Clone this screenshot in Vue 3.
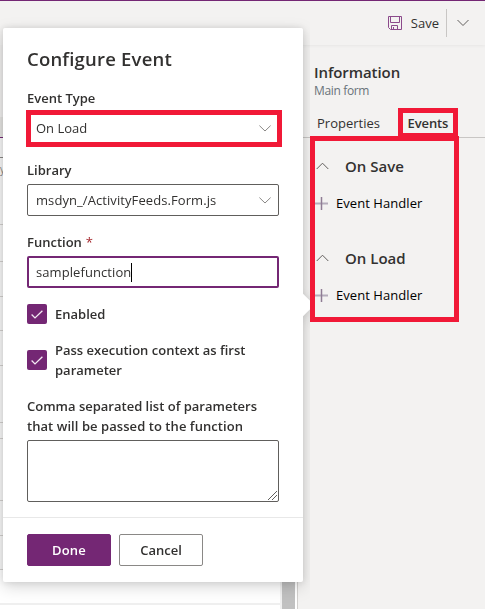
<script setup>
import { ref } from 'vue'

const fn = ref('samplefunction')
const params = ref('')
const groups = [
  { title: 'On Save', key: 'save' },
  { title: 'On Load', key: 'load' },
]
</script>

<template>
  <div class="app">
    <header class="commandbar">
      <button class="save">
        <svg width="14" height="14" viewBox="0 0 14 14" fill="none" stroke="#8b4a8b">
          <path d="M.5.5h13v13H2.500L.5 11.500zM2.500.5v6h9v-6M3.500 13.500V9.500h6v4M5.500 11v2.500" />
        </svg>
        <span class="t-save">Save</span>
      </button>
      <span class="split"></span>
      <svg class="more" width="12" height="8" viewBox="0 0 12 8" fill="none" stroke="#605e5c">
        <path d="M.5 1L6 6.500L11.500 1" />
      </svg>
    </header>

    <main class="body">
      <section class="canvas">
        <div class="canvas-head"></div>
        <div class="canvas-tools"></div>
        <div class="canvas-form">
          <i class="dark"></i><i class="cell">y</i><i></i><i></i><i></i><i></i>
          <i></i><i></i><i></i><i></i><i></i><i></i>
        </div>
        <div class="scrollbar"></div>
      </section>

      <aside class="panel">
        <div class="t-info">Information</div>
        <div class="t-main">Main form</div>
        <nav class="tabs">
          <span class="t-props">Properties</span>
          <span class="mark tab-mark"><b class="t-events">Events</b></span>
        </nav>
        <div class="mark events-mark">
          <section v-for="g in groups" :key="g.key" class="group">
            <div class="group-head">
              <svg width="13" height="8" viewBox="0 0 13 8" fill="none" stroke="#605e5c">
                <path d="M.7 7L6.500 1.200L12.300 7" />
              </svg>
              <span>{{ g.title }}</span>
            </div>
            <div class="handler">
              <svg width="13" height="13" viewBox="0 0 13 13">
                <path d="M0 6.500h13" stroke="#b5adbb" stroke-width="2" />
                <path d="M6.500 0v13" stroke="#8f7c94" stroke-width="1.500" />
              </svg>
              <span class="t-handler">Event Handler</span>
            </div>
          </section>
        </div>
      </aside>
    </main>

    <div class="callout">
      <span class="beak"></span>
      <div class="dialog">
        <div class="content">
          <h1><span class="t-title">Configure Event</span></h1>
          <label><span class="t-type">Event Type</span></label>
          <div class="select mark type-mark">
            <span class="t-onload">On Load</span>
            <svg width="12" height="7" viewBox="0 0 12 7" fill="none" stroke="#8a8886"><path d="M.4.6L6 6L11.600.6" /></svg>
          </div>
          <label class="l-library"><span class="t-library">Library</span></label>
          <div class="select library">
            <span class="t-file">msdyn_/ActivityFeeds.Form.js</span>
            <svg width="12" height="7" viewBox="0 0 12 7" fill="none" stroke="#8a8886"><path d="M.4.6L6 6L11.600.6" /></svg>
          </div>
          <label class="l-function"><span class="t-function">Function</span><em>*</em></label>
          <div class="input"><span class="t-fn">{{ fn }}</span><i class="caret"></i></div>
          <div class="check first">
            <span class="box"><svg width="12" height="9" viewBox="0 0 12 9" fill="none" stroke="#f3eaf3" stroke-width="1.300"><path d="M.6 4.500L4 7.900L11.400.7" /></svg></span>
            <span class="t-enabled">Enabled</span>
          </div>
          <div class="check second">
            <span class="box"><svg width="12" height="9" viewBox="0 0 12 9" fill="none" stroke="#f3eaf3" stroke-width="1.300"><path d="M.6 4.500L4 7.900L11.400.7" /></svg></span>
            <span><span class="t-pass">Pass execution context as first</span><br><span class="t-param">parameter</span></span>
          </div>
          <label class="l-params"><span class="t-comma">Comma separated list of parameters</span><br><span class="t-that">that will be passed to the function</span></label>
          <div class="area">
            {{ params }}
            <svg width="9" height="9" viewBox="0 0 9 9" stroke="#605e5c"><path d="M0 9L9 0M4 9L9 4" /></svg>
          </div>
        </div>
        <footer>
          <button class="btn primary"><span class="t-done">Done</span></button>
          <button class="btn"><span class="t-cancel">Cancel</span></button>
        </footer>
      </div>
    </div>
  </div>
</template>

<style>
body { margin: 0; overflow: hidden; }
</style>

<style scoped>
* { box-sizing: border-box; }
.app { position: relative; width: 485px; height: 609px; overflow: hidden; background: #f3f2f1; color: #323130; font: 13px/20px "Open Sans", "Noto Sans", sans-serif; display: flex; flex-direction: column; }
svg { display: block; flex: none; }
span { white-space: nowrap; }
button { font: inherit; color: inherit; background: none; border: 0; padding: 0; }
.commandbar { height: 45px; flex: none; border-top: 1px solid #742774; display: flex; align-items: center; justify-content: flex-end; padding-right: 16px; box-shadow: 0 1px 3px #0000000d; }
.save { display: flex; align-items: center; gap: 9px; }
.split { width: 1px; height: 28px; background: #c8c6c4; margin: 0 10px 0 7px; }
.body { flex: 1; display: grid; grid-template-columns: 297px 1fr; min-height: 0; }
.canvas { display: grid; grid-template: 72px 21px 1fr / 1fr 15px; background: #fff; }
.canvas-head, .canvas-tools { grid-column: 1 / 3; background: #f0efee; }
.canvas-tools { background: #e5e4e2; border-bottom: 1px solid #742774; }
.canvas-form { display: grid; grid-template-rows: 20px 67px 37px 35px 34px 35px 57px 16px 62px 35px 34px 35px; background: #fff; border-right: 2px solid #f1f1f1; }
.canvas-form i { border-bottom: 1px solid #d2d0ce; background: #f8f8f8; }
.canvas-form .dark { border-color: #8a8886; }
.cell { font-size: 10px; font-style: normal; color: #8a8886; padding-top: 1px; }
.canvas-form i:last-child { border-bottom: 2px solid #efefef; background: #fff; }
.scrollbar { background: #c1c1c1; margin-right: 2px; }
.panel { border-left: 1px solid #d2d0ce; padding: 17px 0 0 12px; }
.t-info { font-size: 15px; font-weight: 600; padding-left: 4px; letter-spacing: -.08px; }
.t-main { font-size: 12px; line-height: 18px; color: #69727a; padding-left: 4px; letter-spacing: -.35px; }
.tabs { display: flex; align-items: center; height: 38px; margin-left: -12px; padding: 8px 0 0 19px; border-bottom: 1px solid #c8c6c4; }
.t-events { font-weight: 600; letter-spacing: -.1px; }
.mark { border: 5px solid #f11937; }
.tab-mark { width: 60px; height: 30px; margin-left: 18px; display: flex; align-items: center; justify-content: center; }
.events-mark { position: relative; width: 149px; height: 186px; margin-top: -2px; padding-top: 15px; }
.group { height: 92px; }
.group-head { height: 20px; display: flex; align-items: center; gap: 16px; padding-left: 1px; font-size: 15px; font-weight: 600; }
.handler { height: 20px; margin-top: 17px; display: flex; align-items: center; gap: 8px; color: #000; letter-spacing: .06px; }
.callout { position: absolute; left: 3px; top: 28px; width: 300px; height: 554px; filter: drop-shadow(0 5px 8px #00000026) drop-shadow(0 0 3px #0000001c); clip-path: polygon(-20px -20px, 307px -20px, 307px 574px, 330px 574px, 330px 590px, -20px 590px); }
.beak { position: absolute; right: -8px; top: 269px; width: 16px; height: 16px; background: #fff; transform: rotate(45deg); }
.dialog { position: relative; height: 100%; background: #fff; border-radius: 2px; display: flex; flex-direction: column; }
.content { height: 490px; padding: 17px 24px 0; display: flex; flex-direction: column; }
h1 { margin: 0; font-size: 18.500px; line-height: 28px; font-weight: 600; height: 28px; letter-spacing: .2px; }
label { display: block; font-weight: 600; height: 20px; margin-top: 15px; }
.select { height: 32px; flex: none; display: flex; align-items: center; justify-content: space-between; padding: 0 7px 0 8px; }
.type-mark { height: 37px; width: 256px; margin: 2px 0 0 -1px; padding: 0 6px 1px 5px; }
.l-library { margin-top: 13px; }
.library { border: 1px solid #605e5c; border-radius: 2px; margin-top: 4px; }
.t-file { letter-spacing: .08px; }
.l-function { margin-top: 16px; }
.t-fn { letter-spacing: .08px; }
em { color: #a4262c; font-style: normal; font-weight: 400; margin-left: 4px; }
.input { height: 32px; flex: none; margin-top: 4px; border: 2px solid #742774; border-radius: 2px; display: flex; align-items: center; padding-left: 7px; }
.caret { width: 1px; height: 19px; background: #000; }
.check { display: flex; align-items: center; gap: 8px; font-weight: 600; }
.first { height: 20px; margin-top: 16px; }
.second { height: 40px; margin-top: 16px; }
.box { width: 20px; height: 20px; border-radius: 2px; background: #742774; display: grid; place-items: center; flex: none; }
.l-params { height: 40px; margin-top: 16px; }
.t-that { letter-spacing: .06px; }
.area { height: 62px; flex: none; margin-top: 4px; border: 1px solid #605e5c; border-radius: 2px; display: flex; align-items: flex-end; justify-content: flex-end; padding: 1px; }
footer { flex: 1; border-top: 1px solid #e8e8e8; padding: 16px 24px; display: flex; gap: 8px; }
.btn { width: 84px; height: 32px; border: 1px solid #8a8886; border-radius: 2px; font-weight: 600; padding-bottom: 1px; }
.primary { background: #742774; border-color: #742774; color: #fff; }
.t-done { letter-spacing: .2px; }
</style>
